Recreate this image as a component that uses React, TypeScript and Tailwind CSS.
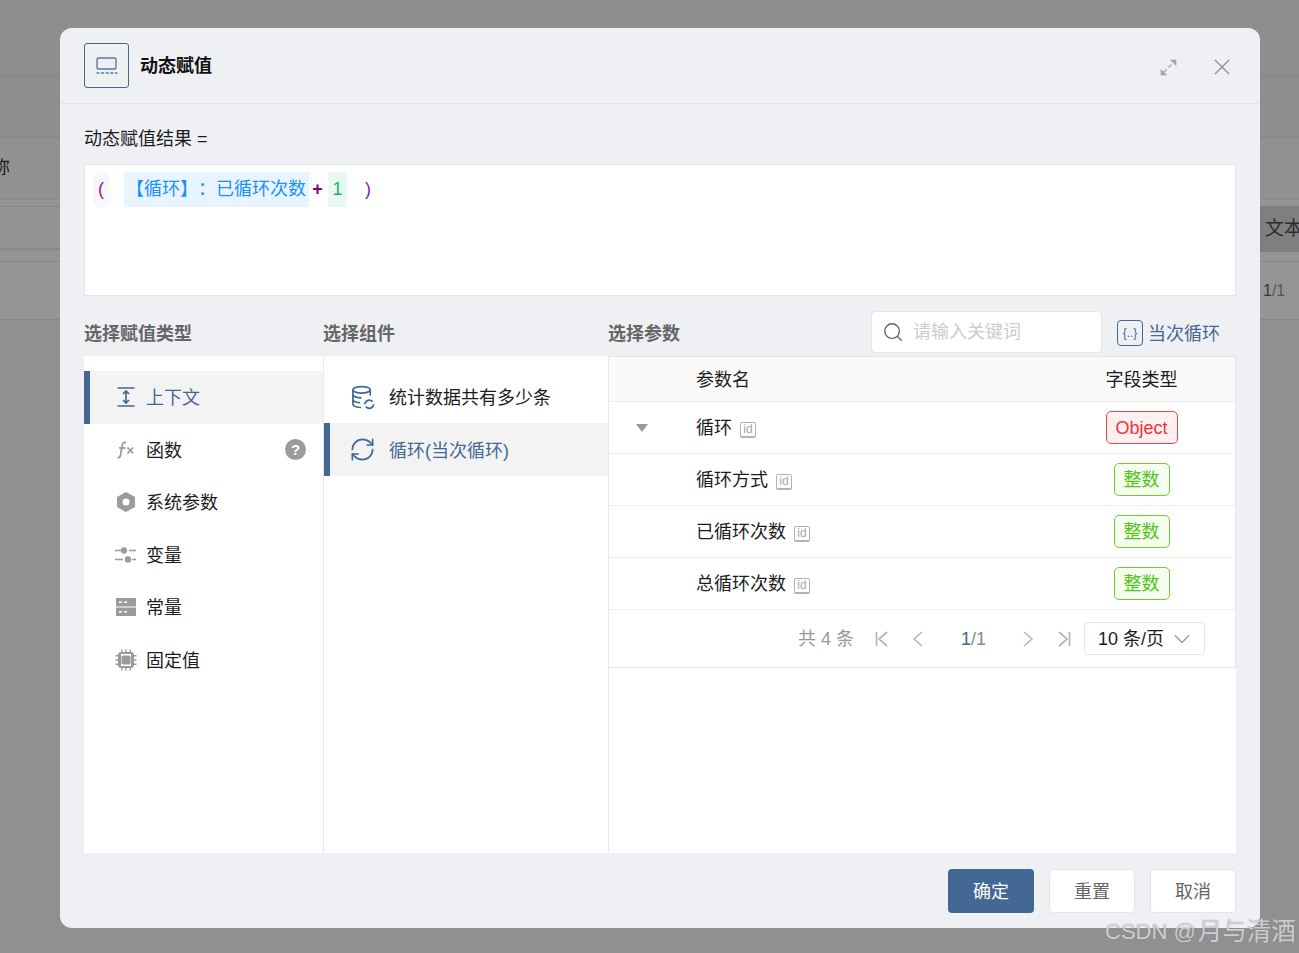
import React from "react";
import { Search, RefreshCw } from "lucide-react";

const font = "font-['Liberation_Sans','Noto_Sans_CJK_SC',sans-serif]";

function IdIcon() {
  return (
    <span className="ml-2 mt-1 flex h-[16px] w-[16px] items-center justify-center rounded-[2px] border border-b-2 border-[#b3b3b3] text-[12px] leading-none text-[#a8a8a8]">
      id
    </span>
  );
}

function Tag({ children, red }: { children: React.ReactNode; red?: boolean }) {
  return (
    <span
      className={
        red
          ? "flex h-[33px] w-[72px] items-center justify-center rounded-[5px] border border-[#f0404c] bg-[#fff0f0] pt-[2px] text-[18px] text-[#f5303d]"
          : "flex h-[33px] w-[56px] items-center justify-center rounded-[5px] border border-[#6ccb3f] bg-[#f6ffed] pt-[2px] text-[18px] text-[#52c41a]"
      }
    >
      {children}
    </span>
  );
}

function Row({ name, red, type, arrow }: { name: string; red?: boolean; type: string; arrow?: boolean }) {
  return (
    <div className="flex h-[52px] items-center border-b border-[#eeeeee]">
      <div className="flex w-[87px] justify-start pl-[27px]">
        {arrow && <span className="h-0 w-0 border-x-[6.5px] border-t-[8px] border-x-transparent border-t-[#999999]" />}
      </div>
      <div className="flex flex-1 items-center text-[18px] text-[#1c1c1c]">
        <span className="pt-[2px]">{name}</span>
        <IdIcon />
      </div>
      <div className="flex w-[187px] justify-center">
        <Tag red={red}>{type}</Tag>
      </div>
    </div>
  );
}

function MenuItem({ icon, label, active, help }: { icon: React.ReactNode; label: string; active?: boolean; help?: boolean }) {
  return (
    <div
      className={
        "flex h-[52.5px] items-center border-l-[6px] pl-[25px] text-[18px] " +
        (active ? "border-[#436893] bg-[#f3f3f3] text-[#436893]" : "border-transparent text-[#1c1c1c]")
      }
    >
      <span className="flex w-[31px] justify-start">{icon}</span>
      <span className="flex-1 pt-[3px]">{label}</span>
      {help && (
        <span className="mr-[17px] flex h-[21px] w-[21px] items-center justify-center rounded-full bg-[#9b9b9b] text-[15px] font-bold text-white">?</span>
      )}
    </div>
  );
}

export default function App() {
  return (
    <div className={"relative h-[953px] w-[1299px] overflow-hidden bg-[#8f9092] " + font}>
      {/* background page */}
      <div className="absolute left-0 right-0 top-0 h-[137px] bg-[#8d8e90]" />
      <div className="absolute left-0 right-0 top-[75px] h-px bg-[#858688]" />
      <div className="absolute left-0 right-0 top-[137px] h-[62px] border-t border-[#858688] bg-[#919191] leading-[60px] text-[#1c1c1c]">
        <span className="ml-[-8px] text-[18px]">称</span>
      </div>
      <div className="absolute left-0 right-0 top-[199px] h-[50px] border-y border-[#8a8a8a] bg-[#949494]" />
      <div className="absolute left-0 right-0 top-[206px] h-px bg-[#858688]" />
      <div className="absolute left-0 right-0 top-[249px] h-[12px] border-t border-[#858688] bg-[#949494]" />
      <div className="absolute left-0 right-0 top-[261px] h-[59px] border-y border-[#858688] bg-[#959595]" />
      <div className="absolute left-[1260px] top-[206px] flex h-[46px] w-[60px] items-center bg-[#7f7f7f] pl-[5px] text-[19px] text-[#2b2b2b]">文本</div>
      <div className="absolute left-[1263px] top-[279px] text-[16px] text-[#555]">
        <span className="text-[#1f3a5a]">1</span>/1
      </div>

      {/* modal */}
      <div className="absolute left-[60px] top-[28px] flex h-[900px] w-[1200px] flex-col overflow-hidden rounded-[12px] bg-[#eff0f4]">
        <div className="flex h-[76px] shrink-0 items-center border-b border-[#e3e4e8] pl-[24px] pr-[30px]">
          <div className="flex h-[45px] w-[45px] items-center justify-center rounded-[3px] border border-[#436893]">
            <svg width="24" height="20" viewBox="0 0 24 20" fill="none" stroke="#5b7a9e" strokeWidth="1.4">
              <rect x="2" y="2" width="19" height="11" rx="1.5" />
              <path d="M1.5 17h21" strokeDasharray="3 1.6" />
            </svg>
          </div>
          <div className="ml-[11px] flex-1 pt-[2px] text-[18px] font-bold text-[#111111]">动态赋值</div>
          <svg width="17" height="17" viewBox="0 0 18 18" fill="#a3a3a3" stroke="#a3a3a3" className="mt-[4px]">
            <path d="M4 14L14 4" strokeWidth="1.3" strokeDasharray="4.5 2.5" />
            <path d="M1 17v-6l6 6zM17 1v6l-6-6z" strokeWidth="0.5" />
          </svg>
          <svg width="16" height="16" viewBox="0 0 16 16" fill="none" stroke="#8f8f8f" strokeWidth="1.4" className="ml-[37px] mt-[3px]">
            <path d="M1 1l14 14M15 1L1 15" />
          </svg>
        </div>

        <div className="flex min-h-0 flex-1 flex-col px-[24px]">
          <div className="mt-[24px] h-[20px] text-[18px] leading-[22px] text-[#1c1c1c]">动态赋值结果 =</div>
          <div className="mt-[16px] flex h-[132px] shrink-0 items-start border border-[#e3e4e8] bg-white pl-[8px] pt-[7px] text-[18px]">
            <span className="mt-[-1px] flex h-[37px] w-[16px] items-center justify-center rounded-[8px] bg-[#f8f8f8] text-[#8a1ca8]">(</span>
            <span className="ml-[15px] flex h-[35px] w-[185px] items-center whitespace-nowrap bg-[#e8f4ff] pl-[2px] text-[#1890ff] [text-spacing-trim:space-all]">【循环】：已循环次数</span>
            <span className="ml-[1px] flex h-[35px] w-[15px] items-center justify-center font-bold text-[#800080]">+</span>
            <span className="ml-[3px] flex h-[35px] w-[19px] items-center justify-center bg-[#e9f9f1] text-[#18b566]">1</span>
            <span className="ml-[18px] flex h-[35px] items-center text-[#8a1ca8]">)</span>
          </div>

          <div className="flex h-[60px] shrink-0 items-end">
            <div className="flex h-[47px] w-[239px] items-center pt-[3px] text-[18px] font-bold text-[#666666]">选择赋值类型</div>
            <div className="flex h-[47px] w-[285px] items-center pt-[3px] text-[18px] font-bold text-[#666666]">选择组件</div>
            <div className="flex h-[47px] flex-1 items-center pt-[3px] text-[18px] font-bold text-[#666666]">选择参数</div>
            <div className="mb-[3px] flex h-[42px] w-[231px] items-center rounded-[4px] border border-[#e3e4e8] bg-white pl-[10px] text-[18px] text-[#cccccc]">
              <Search className="mr-[9px] shrink-0 text-[#666666]" size={22} strokeWidth={1.5} />
              <span className="pt-[1px]">请输入关键词</span>
            </div>
            <div className="ml-[15px] flex h-[47px] w-[119px] items-center text-[18px] text-[#436893]">
              <span className="mr-[5px] flex h-[26px] w-[26px] items-center justify-center rounded-[4px] border border-[#436893] text-[12px]">{"{..}"}</span>
              <span className="pt-[3px]">当次循环</span>
            </div>
          </div>

          <div className="flex min-h-0 flex-1 bg-white">
            <div className="w-[240px] shrink-0 border-r border-[#e8e8e8] pt-[15px]">
              <MenuItem
                active
                label="上下文"
                icon={
                  <svg width="22" height="22" viewBox="0 0 22 22" fill="none" stroke="#436893" strokeWidth="1.7">
                    <path d="M2.5 2h17M2.5 20h17M11 5v12" />
                    <path d="M8 8l3-3 3 3M8 14l3 3 3-3" />
                  </svg>
                }
              />
              <MenuItem
                label="函数"
                help
                icon={
                  <svg width="22" height="22" viewBox="0 0 22 22" fill="none" stroke="#9b9b9b" strokeWidth="1.8">
                    <path d="M11 3.6C8.6 3 7.6 4 7.2 6.4L5.6 16c-.4 2.2-1.6 3-3.2 2.6" />
                    <path d="M4 9h6.5" />
                    <path d="M12.5 8.5l5.5 6M18 8.5l-5.5 6" />
                  </svg>
                }
              />
              <MenuItem
                label="系统参数"
                icon={
                  <svg width="22" height="22" viewBox="0 0 22 22" fill="#9b9b9b">
                    <path fillRule="evenodd" d="M11 1l9 5v10l-9 5-9-5V6zm0 6.5a3.5 3.5 0 100 7 3.5 3.5 0 000-7z" />
                  </svg>
                }
              />
              <MenuItem
                label="变量"
                icon={
                  <svg width="22" height="22" viewBox="0 0 22 22" fill="#9b9b9b" stroke="#9b9b9b" strokeWidth="1.7">
                    <path d="M0 6.5h6M14 6.5h7M0 15.5h8M17 15.5h4" fill="none" />
                    <circle cx="9" cy="6.5" r="2.3" />
                    <circle cx="13" cy="15.5" r="2.3" />
                  </svg>
                }
              />
              <MenuItem
                label="常量"
                icon={
                  <svg width="22" height="22" viewBox="0 0 22 22" fill="#9b9b9b">
                    <path fillRule="evenodd" d="M1 2h20v8.4H1zm0 9.6h20V20H1zM4 5.4v1.6h3V5.4zm5 0v1.6h3V5.4zM4 15v1.6h3V15zm5 0v1.6h3V15z" />
                  </svg>
                }
              />
              <MenuItem
                label="固定值"
                icon={
                  <svg width="22" height="22" viewBox="0 0 22 22" fill="#9b9b9b">
                    <path d="M6 0.5h1.4v3H6zM10.3 0.5h1.4v3h-1.4zM14.6 0.5H16v3h-1.4zM6 18.5h1.4v3H6zM10.3 18.5h1.4v3h-1.4zM14.6 18.5H16v3h-1.4zM0.5 6h3v1.4h-3zM0.5 10.3h3v1.4h-3zM0.5 14.6h3V16h-3zM18.5 6h3v1.4h-3zM18.5 10.3h3v1.4h-3zM18.5 14.6h3V16h-3z" />
                    <path fillRule="evenodd" d="M6 3h10a3 3 0 013 3v10a3 3 0 01-3 3H6a3 3 0 01-3-3V6a3 3 0 013-3zm0 2v12h10V5z" />
                    <rect x="6.5" y="6.5" width="9" height="9" rx="1.5" />
                  </svg>
                }
              />
            </div>

            <div className="w-[285px] shrink-0 border-r border-[#e8e8e8] pt-[15px]">
              <div className="flex h-[52px] items-center border-l-[6px] border-transparent pl-[21px] text-[18px] text-[#1c1c1c]">
                <svg width="25" height="25" viewBox="0 0 26 26" fill="none" stroke="#436893" strokeWidth="1.8" className="mr-[13px] shrink-0">
                  <ellipse cx="11" cy="5" rx="9" ry="3.4" />
                  <path d="M2 5v15c0 1.8 3.8 3.4 8.5 3.4M2 10c0 1.8 3.8 3.4 9 3.4M2 15c0 1.8 3.8 3.4 7.5 3.4M20 5v6" />
                  <path d="M14.5 20a4.5 4.5 0 018-2.5M23.5 20a4.5 4.5 0 01-8 2.5" />
                </svg>
                <span className="pt-[3px]">统计数据共有多少条</span>
              </div>
              <div className="flex h-[53px] items-center border-l-[6px] border-[#436893] bg-[#f3f3f3] pl-[19px] text-[18px] text-[#436893]">
                <RefreshCw className="mr-[13px] shrink-0" size={27} strokeWidth={1.5} />
                <span className="pt-[3px]">循环(当次循环)</span>
              </div>
            </div>

            <div className="min-w-0 flex-1">
              <div className="border-b border-r border-t border-[#e3e4e8]">
                <div className="flex h-[45px] items-center border-b border-[#eeeeee] bg-[#fafafa] pt-[2px] text-[18px] text-[#1c1c1c]">
                  <div className="w-[87px]" />
                  <div className="flex-1">参数名</div>
                  <div className="w-[187px] text-center">字段类型</div>
                </div>
                <Row arrow name="循环" type="Object" red />
                <Row name="循环方式" type="整数" />
                <Row name="已循环次数" type="整数" />
                <Row name="总循环次数" type="整数" />
                <div className="flex h-[57px] items-center justify-end pr-[30px] text-[18px] text-[#999999]">
                  <span className="mr-[21px] pt-[2px]">共 4 条</span>
                  <svg width="13" height="16" viewBox="0 0 13 16" fill="none" stroke="#b5b5b5" strokeWidth="1.7" className="mr-[24px]">
                    <path d="M1.5 1v14M12 1L4 8l8 7" />
                  </svg>
                  <svg width="11" height="16" viewBox="0 0 11 16" fill="none" stroke="#b5b5b5" strokeWidth="1.5" className="mr-[38px]">
                    <path d="M10 1L2 8l8 7" />
                  </svg>
                  <span className="mr-[37px] pt-[1px] text-[#8a8a8a]">
                    <span className="text-[#436893]">1</span>/1
                  </span>
                  <svg width="11" height="16" viewBox="0 0 11 16" fill="none" stroke="#b5b5b5" strokeWidth="1.5" className="mr-[24px]">
                    <path d="M1 1l8 7-8 7" />
                  </svg>
                  <svg width="13" height="16" viewBox="0 0 13 16" fill="none" stroke="#b5b5b5" strokeWidth="1.7" className="mr-[13px]">
                    <path d="M11.5 1v14M1 1l8 7-8 7" />
                  </svg>
                  <div className="flex h-[33px] w-[121px] items-center justify-between rounded-[4px] border border-[#e3e4e8] pl-[13px] pr-[14px] text-[#1c1c1c]">
                    <span className="pt-[1px]">10 条/页</span>
                    <svg width="16" height="10" viewBox="0 0 16 10" fill="none" stroke="#999999" strokeWidth="1.4">
                      <path d="M1 1.5l7 7 7-7" />
                    </svg>
                  </div>
                </div>
              </div>
            </div>
          </div>

          <div className="flex h-[75px] shrink-0 items-start justify-end gap-[15px] pt-[16px] text-[18px]">
            <button className="h-[44px] w-[86px] rounded-[4px] bg-[#436893] pt-[2px] text-white">确定</button>
            <button className="h-[44px] w-[86px] rounded-[4px] border border-[#e3e4e8] bg-white pt-[2px] text-[#666666]">重置</button>
            <button className="h-[44px] w-[86px] rounded-[4px] border border-[#e3e4e8] bg-white pt-[2px] text-[#666666]">取消</button>
          </div>
        </div>
      </div>

      {/* watermark */}
      <div className="absolute left-[1105px] top-[916px] flex items-center whitespace-nowrap leading-[32px] text-[#ffffffa6] [text-shadow:0_0_1px_#777]">
        <span className="mr-[2px] text-[22px]">CSDN @</span>
        <span className="text-[24.5px]">月与清酒</span>
      </div>
    </div>
  );
}
